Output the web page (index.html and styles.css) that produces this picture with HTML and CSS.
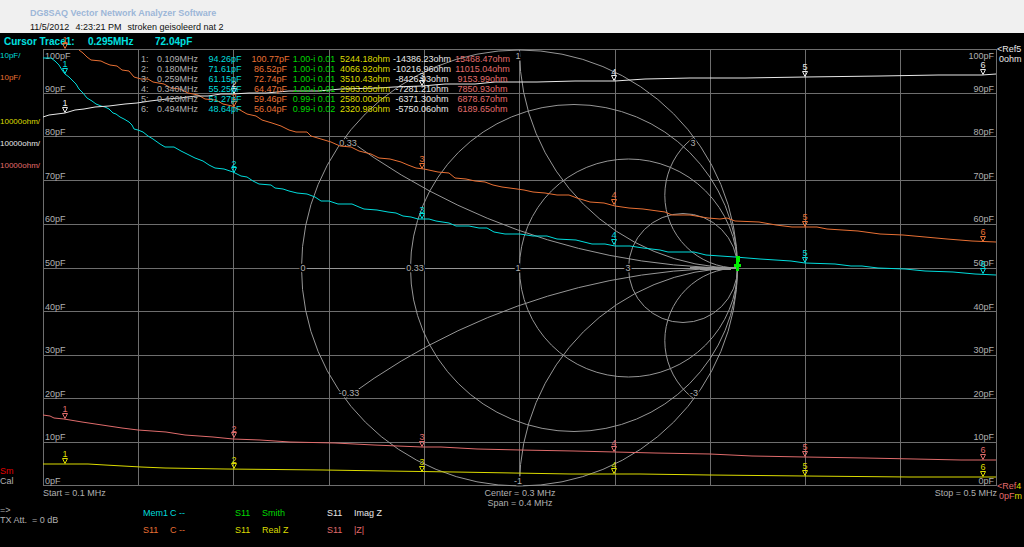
FILE: index.html
```html
<!DOCTYPE html>
<html lang="en">
<head>
<meta charset="utf-8">
<title>DG8SAQ Vector Network Analyzer Software</title>
<link rel="stylesheet" href="styles.css">
</head>
<body>
<header class="titlebar">
  <h1 class="title">DG8SAQ Vector Network Analyzer Software</h1>
  <p class="session"><span>11/5/2012</span><span>4:23:21 PM</span><span>stroken geisoleerd nat 2</span></p>
</header>
<main class="analyzer">
  <div class="cursor"><span class="cursor-name">Cursor Trace1:</span><span class="cursor-freq">0.295MHz</span><span>72.04pF</span></div>
  <section class="display">
    <div class="side">
      <ul class="scales">
        <li class="cyan">10pF/</li>
        <li class="orange">10pF/</li>
        <li></li>
        <li class="yellow">10000ohm/</li>
        <li class="white">10000ohm/</li>
        <li class="pink">10000ohm/</li>
      </ul>
      <p class="state"><span class="red">Sm</span><br>Cal</p>
    </div>
    <div class="plot">
      <svg class="chart" viewBox="43 49 954 438" role="img" aria-label="Traces and Smith chart">
        <defs>
          <clipPath id="disc"><circle cx="519.5" cy="268" r="218"/></clipPath>
          <path id="tip" d="M-2.5-5.5h5L0-.5z"/>
        </defs>
        <path class="grid" d="M43.5 49.5V486M138.5 49.5V486M233.5 49.5V486M329.5 49.5V486M424.5 49.5V486M519.5 49.5V486M615.5 49.5V486M710.5 49.5V486M805.5 49.5V486M900.5 49.5V486M996.5 49.5V486M43 49.5H997M43 93.5H997M43 136.5H997M43 180.5H997M43 224.5H997M43 268.5H997M43 311.5H997M43 355.5H997M43 398.5H997M43 442.5H997M43 485.5H997"/>
        <g class="smith">
          <circle cx="519.5" cy="268" r="218"/>
          <circle cx="574" cy="268" r="163.5"/>
          <circle cx="628.5" cy="268" r="109"/>
          <circle cx="683" cy="268" r="54.5"/>
          <g clip-path="url(#disc)">
            <circle cx="737.5" cy="50" r="218"/>
            <circle cx="737.5" cy="486" r="218"/>
            <circle cx="737.5" cy="195.3" r="72.7"/>
            <circle cx="737.5" cy="340.7" r="72.7"/>
            <circle cx="737.5" cy="-386" r="654"/>
            <circle cx="737.5" cy="922" r="654"/>
          </g>
          <path d="M301 268.5H738M690 267.5H731M700 269.5H731"/>
        </g>
        <g class="smith-labels">
          <text x="303" y="271">0</text><text x="415" y="271">0.33</text><text x="518" y="271">1</text><text x="628" y="271">3</text>
          <text x="348" y="146">0.33</text><text x="693" y="146">3</text><text x="349" y="396">-0.33</text><text x="694" y="396">-3</text>
          <text x="518" y="59">1</text><text x="518" y="484">-1</text>
        </g>
        <g class="axis">
          <text x="45" y="59">100pF</text><text x="45" y="92">90pF</text><text x="45" y="135">80pF</text><text x="45" y="179">70pF</text><text x="45" y="222">60pF</text><text x="45" y="266">50pF</text><text x="45" y="310">40pF</text><text x="45" y="353">30pF</text><text x="45" y="397">20pF</text><text x="45" y="440">10pF</text><text x="45" y="484">0pF</text>
        </g>
        <g class="axis axis-right">
          <text x="994" y="59">100pF</text><text x="994" y="92">90pF</text><text x="994" y="135">80pF</text><text x="994" y="179">70pF</text><text x="994" y="222">60pF</text><text x="994" y="266">50pF</text><text x="994" y="310">40pF</text><text x="994" y="353">30pF</text><text x="994" y="397">20pF</text><text x="994" y="440">10pF</text><text x="994" y="484">0pF</text>
        </g>
        <g class="trace cyan">
          <polyline points="43,58 51,58 55,61 59,65 62,70 65,74 69,77 72,80 76,84 79,89 83,93 87,98 92,101 96,104 101,106 105,107 109,109 113,113 116,114 120,117 124,119 129,122 132,125 134,129 138,130 143,132 148,136 153,139 160,144 165,147 174,147 181,151 187,154 195,158 203,161 209,165 215,168 224,169 233,172 241,176 247,177 253,181 259,184 271,185 275,188 283,189 289,191 297,193 307,194 315,197 321,201 329,201 338,204 352,204 359,207 364,209 377,210 388,212 396,213 403,216 411,217 418,219 429,219 436,221 449,223 456,226 469,226 479,228 487,228 494,232 505,234 520,234 533,236 547,236 557,239 576,240 592,244 605,244 615,246 630,246 643,248 660,250 668,252 694,252 706,255 735,257 760,259 791,261 805,263 835,264 851,266 862,266 878,268 905,269 925,271 953,272 975,274 996,275"/>
        </g>
        <g class="trace orange">
          <polyline points="79,50 83,53 87,57 91,60 101,61 105,63 110,65 117,66 122,70 129,71 134,77 141,79 148,79 153,82 164,84 171,88 180,89 188,93 198,95 205,99 216,100 223,104 232,106 240,110 247,114 256,116 262,120 272,123 281,126 289,130 296,132 307,132 311,136 321,139 331,142 340,146 351,147 359,151 371,154 379,158 390,159 401,162 408,165 416,168 424,169 438,172 449,173 455,178 466,179 475,181 485,182 493,185 502,187 517,189 524,190 533,192 545,193 557,195 569,195 577,198 590,202 604,203 615,206 629,208 643,209 665,212 672,215 690,215 708,218 720,219 727,218 735,221 759,222 776,225 792,227 817,227 827,229 858,231 880,234 903,235 925,237 947,239 972,241 996,242"/>
        </g>
        <g class="trace white">
          <polyline points="43,117 49,115 57,114 65,113 75,110 84,109 95,107 109,106 125,104 137,103 150,101 167,99 180,98 196,96 208,96 221,94 233,94 249,93 266,93 289,91 318,91 341,89 378,88 394,87 422,86 445,84 475,84 495,82 537,82 575,81 615,81 645,79 690,78 745,78 805,77 880,76 938,75 982,75 996,74"/>
        </g>
        <g class="trace pink">
          <polyline points="43,415 50,416 54,418 64,419 82,422 102,425 122,428 138,430 166,432 185,435 213,437 233,439 260,440 290,442 335,443 374,445 422,447 441,447 477,449 520,450 574,451 615,452 655,453 710,454 752,456 805,457 865,458 915,459 961,460 996,460"/>
        </g>
        <g class="trace yellow">
          <polyline points="43,464 88,464 105,465 123,466 141,467 165,468 225,469 324,470 387,471 455,472 513,473 571,474 640,474 710,475 805,476 909,477 996,477"/>
        </g>
        <g class="marks cyan">
          <text x="65" y="67">1</text><use href="#tip" x="65" y="74"/>
          <text x="234" y="167">2</text><use href="#tip" x="234" y="173"/>
          <text x="422" y="213">3</text><use href="#tip" x="422" y="219"/>
          <text x="614" y="238">4</text><use href="#tip" x="614" y="245"/>
          <text x="805" y="256">5</text><use href="#tip" x="805" y="263"/>
          <text x="983" y="267">6</text><use href="#tip" x="983" y="274"/>
        </g>
        <g class="marks orange">
          <text x="65" y="43">1</text><use href="#tip" x="65" y="49"/>
          <text x="234" y="100">2</text><use href="#tip" x="234" y="107"/>
          <text x="422" y="162">3</text><use href="#tip" x="422" y="169"/>
          <text x="614" y="198">4</text><use href="#tip" x="614" y="205"/>
          <text x="805" y="220">5</text><use href="#tip" x="805" y="227"/>
          <text x="983" y="235">6</text><use href="#tip" x="983" y="242"/>
        </g>
        <g class="marks white">
          <text x="65" y="106">1</text><use href="#tip" x="65" y="113"/>
          <text x="234" y="87">2</text><use href="#tip" x="234" y="94"/>
          <text x="422" y="79">3</text><use href="#tip" x="422" y="86"/>
          <text x="614" y="75">4</text><use href="#tip" x="614" y="81"/>
          <text x="805" y="70">5</text><use href="#tip" x="805" y="77"/>
          <text x="983" y="68">6</text><use href="#tip" x="983" y="75"/>
        </g>
        <g class="marks pink">
          <text x="65" y="412">1</text><use href="#tip" x="65" y="419"/>
          <text x="234" y="432">2</text><use href="#tip" x="234" y="438"/>
          <text x="422" y="440">3</text><use href="#tip" x="422" y="447"/>
          <text x="614" y="446">4</text><use href="#tip" x="614" y="452"/>
          <text x="805" y="450">5</text><use href="#tip" x="805" y="457"/>
          <text x="983" y="453">6</text><use href="#tip" x="983" y="460"/>
        </g>
        <g class="marks yellow">
          <text x="65" y="457">1</text><use href="#tip" x="65" y="464"/>
          <text x="234" y="463">2</text><use href="#tip" x="234" y="469"/>
          <text x="422" y="465">3</text><use href="#tip" x="422" y="472"/>
          <text x="614" y="468">4</text><use href="#tip" x="614" y="474"/>
          <text x="805" y="469">5</text><use href="#tip" x="805" y="476"/>
          <text x="983" y="470">6</text><use href="#tip" x="983" y="477"/>
        </g>
        <path class="smith-mark" d="M736 256h4v6h-1v2h2v3h-2v4h-3v-4h-2v-3h2z"/>
      </svg>
      <table class="markers">
        <tr><td class="idx">1:</td><td class="freq">0.109MHz</td><td class="cyan c3">94.26pF</td><td class="orange c4">100.77pF</td><td class="green c5">1.00-i 0.01</td><td class="yellow c6">5244.18ohm</td><td class="white c7">-14386.23ohm</td><td class="pink c8">15468.47ohm</td></tr>
        <tr><td>2:</td><td>0.180MHz</td><td class="cyan">71.61pF</td><td class="orange">86.52pF</td><td class="green">1.00-i 0.01</td><td class="yellow">4066.92ohm</td><td class="white">-10216.96ohm</td><td class="pink">11015.04ohm</td></tr>
        <tr><td>3:</td><td>0.259MHz</td><td class="cyan">61.15pF</td><td class="orange">72.74pF</td><td class="green">1.00-i 0.01</td><td class="yellow">3510.43ohm</td><td class="white">-8426.93ohm</td><td class="pink">9153.99ohm</td></tr>
        <tr><td>4:</td><td>0.340MHz</td><td class="cyan">55.25pF</td><td class="orange">64.47pF</td><td class="green">1.00-i 0.01</td><td class="yellow">2983.05ohm</td><td class="white">-7281.21ohm</td><td class="pink">7850.93ohm</td></tr>
        <tr><td>5:</td><td>0.420MHz</td><td class="cyan">51.27pF</td><td class="orange">59.46pF</td><td class="green">0.99-i 0.01</td><td class="yellow">2580.00ohm</td><td class="white">-6371.30ohm</td><td class="pink">6878.67ohm</td></tr>
        <tr><td>6:</td><td>0.494MHz</td><td class="cyan">48.64pF</td><td class="orange">56.04pF</td><td class="green">0.99-i 0.02</td><td class="yellow">2320.98ohm</td><td class="white">-5750.06ohm</td><td class="pink">6189.65ohm</td></tr>
      </table>
    </div>
    <div class="refs">
      <p class="white">&lt;Ref5<br><span class="level">0ohm</span></p>
      <p class="pink">&lt;Ref<span class="yellow">4</span><br><span class="level">0pF<span class="yellow">m</span></span></p>
    </div>
  </section>
  <div class="sweep"><span>Start = 0.1 MHz</span><span class="mid">Center = 0.3 MHz<br>Span = 0.4 MHz</span><span class="end">Stop = 0.5 MHz</span></div>
  <footer class="footer">
    <p class="status">=&gt;<br>TX Att. &nbsp;= 0 dB</p>
    <div class="legend">
      <p class="cyan"><span>Mem1</span><span>C --</span></p>
      <p class="green"><span>S11</span><span>Smith</span></p>
      <p class="white"><span>S11</span><span>Imag Z</span></p>
      <p class="orange"><span>S11</span><span>C --</span></p>
      <p class="yellow"><span>S11</span><span>Real Z</span></p>
      <p class="pink"><span>S11</span><span>|Z|</span></p>
    </div>
  </footer>
</main>
</body>
</html>
```
FILE: styles.css
```css
* { box-sizing: border-box; }
body {
  margin: 0;
  min-height: 100vh;
  background: #000;
  color: #b0b0b0;
  font: 9px/10px "Liberation Sans", Arial, sans-serif;
}
h1, p, ul { margin: 0; padding: 0; }
li { list-style: none; }

.cyan { color: #00dcdc; }
.orange { color: #e87034; }
.yellow { color: #dcdc00; }
.white { color: #e8e8e8; }
.pink { color: #e06c6c; }
.green { color: #00d800; }
.red { color: #e00000; }

.titlebar {
  padding: 6px 30px 0;
  height: 33px;
  background: #f0f0f0;
  color: #111;
}
.title { color: #9db7d8; font-size: 9px; line-height: 14px; }
.session { display: flex; gap: 6px; line-height: 14px; }

.cursor {
  display: flex;
  padding: 2px 0 0 4px;
  color: #00e0e0;
  font-weight: bold;
  font-size: 10px;
  line-height: 14px;
}
.cursor-name { width: 84px; }
.cursor-freq { width: 67px; }

.display { display: grid; grid-template-columns: 43px minmax(0, 1fr) 27px; }
.side { display: flex; flex-direction: column; justify-content: space-between; }
.scales { display: grid; gap: 10px; padding-top: 1px; font-size: 8px; }
.scales li { height: 12px; line-height: 12px; white-space: nowrap; }
.state { padding-bottom: 1px; }

.plot { position: relative; }
.chart { display: block; width: 100%; overflow: visible; }
.grid { stroke: #6e6e6e; fill: none; }
.smith { stroke: #969696; fill: none; }
.smith-labels { fill: #b0b0b0; stroke: #000; stroke-width: 3px; paint-order: stroke; text-anchor: middle; }
.axis { fill: #b0b0b0; }
.axis-right { text-anchor: end; }
.trace { fill: none; stroke: currentColor; stroke-width: 1px; }
.marks { fill: none; stroke: currentColor; }
.marks text { fill: currentColor; stroke: none; text-anchor: middle; }
.smith-mark { fill: #00f000; }

.markers {
  position: absolute;
  top: 5px;
  left: 98px;
  width: 373px;
  table-layout: fixed;
  border-collapse: collapse;
}
.markers td { padding: 0; height: 10px; text-align: center; white-space: nowrap; }
.markers td:nth-child(-n+2) { text-align: left; }
.idx { width: 16px; }
.freq { width: 43px; }
.c3 { width: 50px; }
.c4 { width: 41px; }
.c5 { width: 46px; }
.c6 { width: 56px; }
.c7 { width: 58px; }
.c8 { width: 63px; }

.refs { display: flex; flex-direction: column; justify-content: space-between; margin: -5px 0 -14px; }
.level { padding-left: 2px; }

.sweep { display: grid; grid-template-columns: 1fr 1fr 1fr; padding: 1px 27px 0 43px; }
.mid { text-align: center; }
.end { text-align: right; }

.footer { display: flex; margin-top: -3px; }
.status { width: 143px; }
.legend { display: grid; grid-template-columns: 92px 92px 92px; line-height: 17px; }
.legend p { display: grid; grid-template-columns: 27px 1fr; }
```
